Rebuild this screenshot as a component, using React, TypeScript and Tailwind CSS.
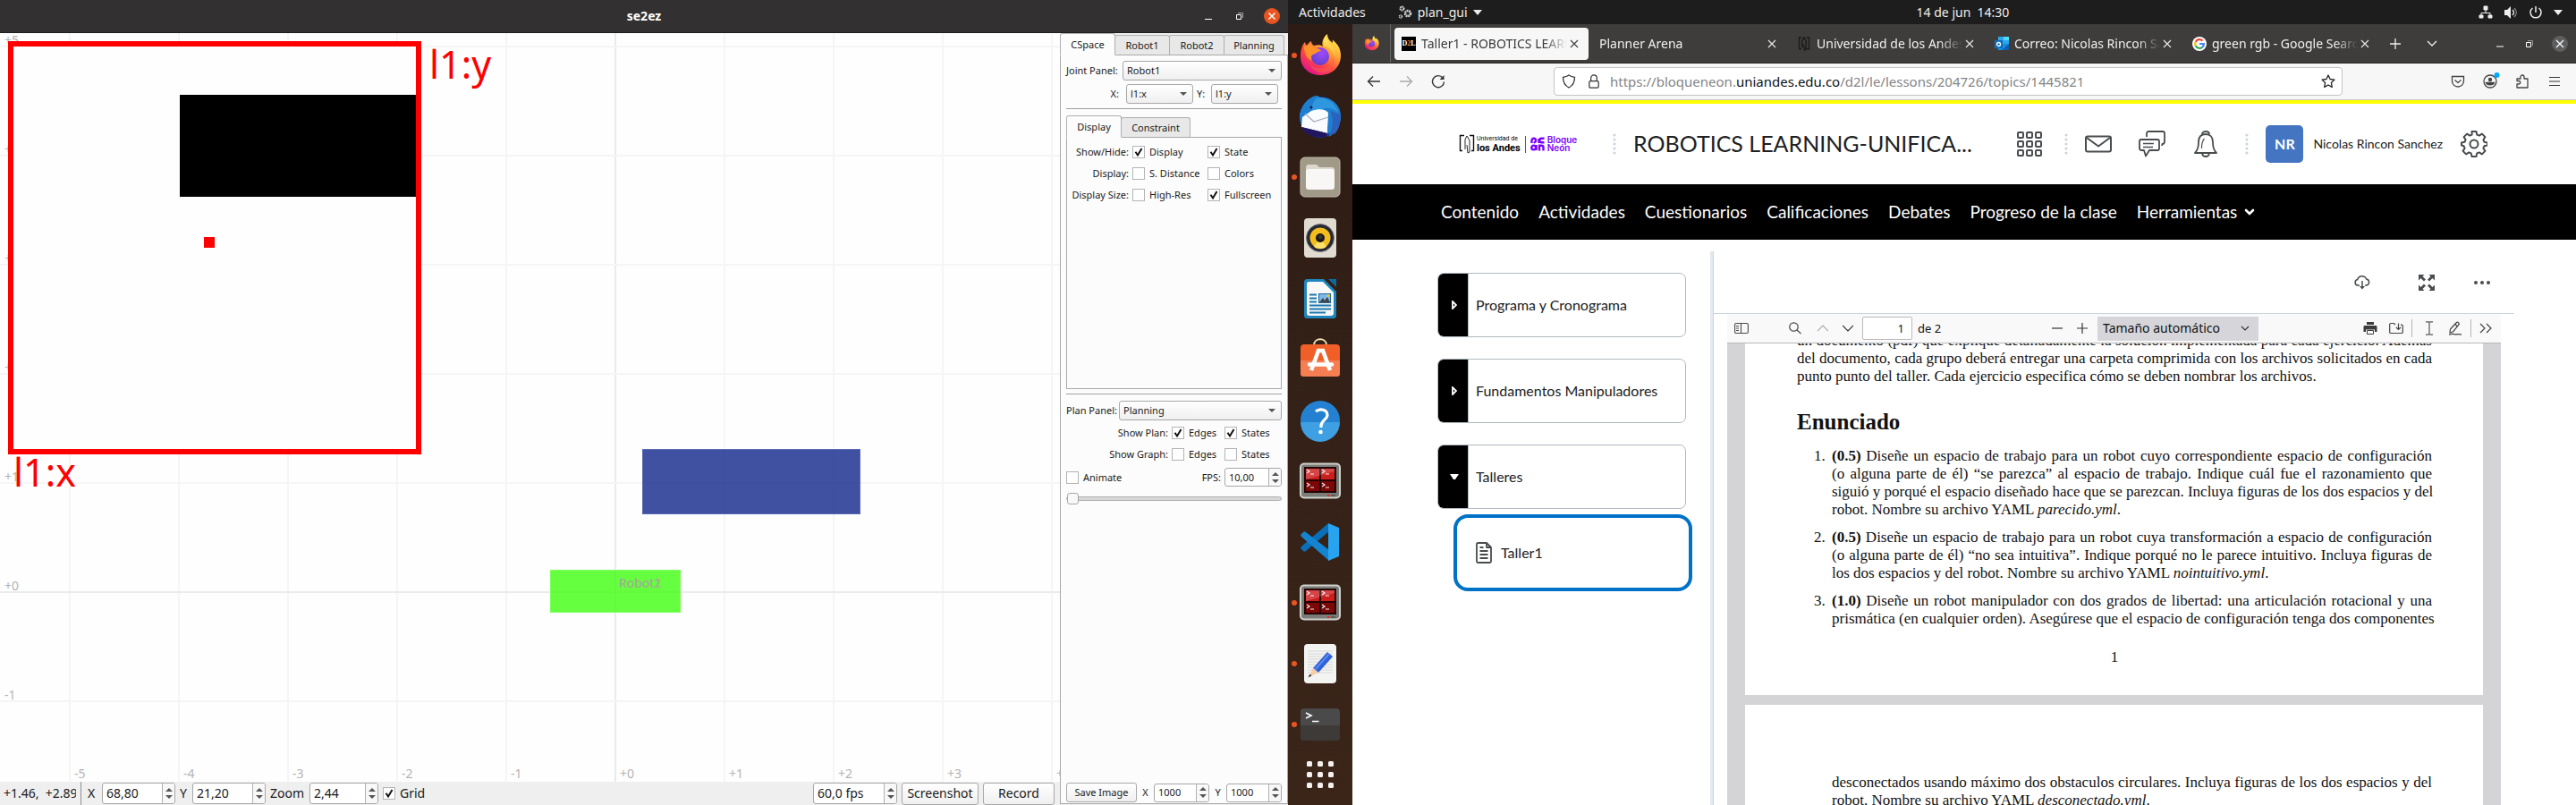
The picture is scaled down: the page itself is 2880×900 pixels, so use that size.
import React, { type ReactNode } from "react";

const UI = "font-['Noto_Sans','Open_Sans',sans-serif]";

/* ---------- Shared form controls of the Qt window ---------- */

function Tick({ label, checked, big }: { label: string; checked?: boolean; big?: boolean }) {
  return (
    <label className={`flex items-center ${big ? "gap-[5px] text-sm" : "gap-[5px] text-[11px]"}`}>
      <span className="grid size-3.5 shrink-0">
        <input
          type="checkbox"
          defaultChecked={checked}
          className="peer col-start-1 row-start-1 size-3.5 appearance-none border border-[#b4b4b4] bg-white"
        />
        <svg
          viewBox="0 0 14 14"
          className="pointer-events-none invisible col-start-1 row-start-1 size-3.5 peer-checked:visible"
          fill="none"
          stroke="#111"
          strokeWidth="2"
        >
          <path d="M3.5 6.8 6 10.5 10.5 3" />
        </svg>
      </span>
      {label}
    </label>
  );
}

function Spin({ id, value, className, label, big }: { id: string; value: string; className: string; label?: string; big?: boolean }) {
  return (
    <span className={`flex overflow-hidden rounded-[3px] border border-[#a8a8a8] bg-white ${className}`}>
      <input
        id={id}
        aria-label={label}
        defaultValue={value}
        className={`min-w-0 flex-1 bg-transparent pl-1 outline-none ${big ? "text-sm" : "text-[11px]"}`}
      />
      <span className="flex w-3.5 shrink-0 flex-col border-l border-[#b0b0b0] bg-[#f8f8f8]">
        <button type="button" aria-label="Aumentar" className="flex flex-1 items-end justify-center pb-0.5">
          <svg viewBox="0 0 8 4" className="h-1 w-2" fill="#555">
            <path d="M0 4h8L4 0z" />
          </svg>
        </button>
        <button type="button" aria-label="Disminuir" className="flex flex-1 items-start justify-center pt-0.5">
          <svg viewBox="0 0 8 4" className="h-1 w-2" fill="#555">
            <path d="M0 0h8L4 4z" />
          </svg>
        </button>
      </span>
    </span>
  );
}

function Combo({ id, value, className }: { id: string; value: string; className: string }) {
  return (
    <span className={`grid h-[22px] items-center ${className}`}>
      <select
        id={id}
        className="col-start-1 row-start-1 h-[22px] w-full appearance-none rounded-[3px] border border-[#a8a8a8] bg-linear-to-b from-white to-[#efefef] pl-1 text-[11px]"
      >
        <option>{value}</option>
      </select>
      <svg
        viewBox="0 0 8 4"
        className="pointer-events-none col-start-1 row-start-1 mr-[7px] h-1 w-2 justify-self-end"
        fill="#555"
      >
        <path d="M0 0h8L4 4z" />
      </svg>
    </span>
  );
}

function QtButton({ children, className }: { children: ReactNode; className: string }) {
  return (
    <button
      type="button"
      className={`whitespace-nowrap rounded-[3px] border border-[#a8a8a8] bg-linear-to-b from-white to-[#efefef] ${className}`}
    >
      {children}
    </button>
  );
}

/* ---------- Workspace plot ---------- */

const COLS = [
  { x: 78, t: "-5" },
  { x: 200, t: "-4" },
  { x: 322, t: "-3" },
  { x: 444, t: "-2" },
  { x: 566, t: "-1" },
  { x: 688, t: "+0" },
  { x: 810, t: "+1" },
  { x: 932, t: "+2" },
  { x: 1054, t: "+3" },
  { x: 1176, t: "+4" },
];
const ROWS = [
  { y: 15, t: "+5" },
  { y: 137, t: "+4" },
  { y: 259, t: "+3" },
  { y: 381, t: "+2" },
  { y: 503, t: "+1" },
  { y: 625, t: "+0" },
  { y: 747, t: "-1" },
];

function Plot() {
  return (
    <svg className="min-h-0 w-full flex-1 bg-[#fefefe]" fontFamily="Noto Sans, sans-serif" fontSize="14">
      {COLS.map((c) => (
        <rect key={c.t} x={c.x - 1} y="0" width="2" height="100%" fill={c.t === "+0" ? "#ebebeb" : "#f5f5f5"} />
      ))}
      {ROWS.map((r) => (
        <rect key={r.t} x="0" y={r.y - 1} width="100%" height="2" fill={r.t === "+0" ? "#ebebeb" : "#f5f5f5"} />
      ))}
      {ROWS.map((r) => (
        <text key={r.t} x="5" y={r.y - 2} fill="#b4b4b4">
          {r.t}
        </text>
      ))}
      {COLS.map((c) => (
        <text key={c.t} x={c.x + 5} y="833" fill="#b4b4b4">
          {c.t}
        </text>
      ))}
      <rect x="718.5" y="465.5" width="243" height="72" fill="#12268a" fillOpacity="0.8" stroke="#5a69b4" />
      <rect x="615.5" y="600.5" width="145" height="47" fill="#40ff10" fillOpacity="0.8" stroke="#7dff5e" />
      <g fill="#9fb18f">
        <text x="692" y="620">Robot1</text>
        <text x="692" y="620">Robot2</text>
      </g>
      <rect x="12" y="12" width="456" height="456" fill="#fefefe" stroke="#f00" strokeWidth="6" />
      <rect x="201" y="69" width="264" height="114" fill="#000" />
      <rect x="228" y="228" width="12" height="12" fill="#f00" />
      <g fill="#f00" fontSize="43">
        <text x="480" y="51">l1:y</text>
        <text x="15" y="507">l1:x</text>
      </g>
    </svg>
  );
}

function PanelTab({ children, active, className }: { children: ReactNode; active?: boolean; className: string }) {
  return (
    <button
      type="button"
      role="tab"
      aria-selected={!!active}
      className={`rounded-t-[3px] border border-[#b0b0b0] text-[11px] ${
        active ? "z-10 h-[25px] border-b-[#fcfcfc] bg-[#fcfcfc]" : "-ml-px h-[23px] bg-[#e8e8e8] border-b-[#a9a9a9]"
      } ${className}`}
    >
      {children}
    </button>
  );
}

function SidePanel() {
  return (
    <aside className="flex w-[255px] shrink-0 flex-col bg-[#efefef] text-[11px] leading-[14px] text-[#1a1a1a]">
      <div role="tablist" className="flex items-end">
        <PanelTab active className="w-[62px]">CSpace</PanelTab>
        <PanelTab className="w-[62px]">Robot1</PanelTab>
        <PanelTab className="w-[62px]">Robot2</PanelTab>
        <PanelTab className="w-[68px]">Planning</PanelTab>
      </div>
      <div className="-mt-px mb-px flex flex-1 flex-col border border-[#a9a9a9] bg-[#fcfcfc] px-1.5 pt-1.5">
        <div className="flex items-center">
          <label htmlFor="joint" className="w-[63px] whitespace-nowrap">Joint Panel:</label>
          <Combo id="joint" value="Robot1" className="flex-1" />
        </div>
        <div className="mt-1 flex items-center pr-1">
          <label htmlFor="jx" className="w-[59px] text-right">X:</label>
          <Combo id="jx" value="l1:x" className="ml-2 flex-1" />
          <label htmlFor="jy" className="ml-1 w-3">Y:</label>
          <Combo id="jy" value="l1:y" className="ml-1 flex-1" />
        </div>
        <hr className="mt-[5px] border-[#a0a0a0]" />
        <div role="tablist" className="mt-[7px] flex items-end">
          <PanelTab active className="w-[62px]">Display</PanelTab>
          <PanelTab className="w-[78px]">Constraint</PanelTab>
        </div>
        <div className="-mt-px grid h-[282px] grid-cols-[69px_84px_1fr] content-start gap-y-2.5 border border-[#a9a9a9] pt-[9px]">
          <span className="text-right">Show/Hide:</span>
          <span className="pl-1"><Tick label="Display" checked /></span>
          <span className="pl-1"><Tick label="State" checked /></span>
          <span className="text-right">Display:</span>
          <span className="whitespace-nowrap pl-1"><Tick label="S. Distance" /></span>
          <span className="pl-1"><Tick label="Colors" /></span>
          <span className="whitespace-nowrap text-right">Display Size:</span>
          <span className="pl-1"><Tick label="High-Res" /></span>
          <span className="pl-1"><Tick label="Fullscreen" checked /></span>
        </div>
        <hr className="mt-[5px] border-[#a0a0a0]" />
        <div className="mt-[7px] flex items-center">
          <label htmlFor="plan" className="w-[59px] whitespace-nowrap">Plan Panel:</label>
          <Combo id="plan" value="Planning" className="flex-1" />
        </div>
        <div className="mt-[7px] grid grid-cols-[1fr_59px_64px] gap-y-2.5">
          <span className="pr-1 text-right">Show Plan:</span>
          <Tick label="Edges" checked />
          <Tick label="States" checked />
          <span className="pr-1 text-right">Show Graph:</span>
          <Tick label="Edges" />
          <Tick label="States" />
        </div>
        <div className="mt-2 flex items-center">
          <Tick label="Animate" />
          <label htmlFor="fps" className="ml-auto mr-1">FPS:</label>
          <Spin id="fps" value="10,00" className="h-[21px] w-16" />
        </div>
        <input
          type="range"
          aria-label="Progreso de la animación"
          defaultValue={0}
          className="mt-1.5 h-3.5 w-full appearance-none bg-transparent [&::-webkit-slider-runnable-track]:h-[5px] [&::-webkit-slider-runnable-track]:rounded-[3px] [&::-webkit-slider-runnable-track]:border [&::-webkit-slider-runnable-track]:border-[#b0b0b0] [&::-webkit-slider-runnable-track]:bg-[#d8d8d8] [&::-webkit-slider-thumb]:-mt-[5px] [&::-webkit-slider-thumb]:size-[13px] [&::-webkit-slider-thumb]:appearance-none [&::-webkit-slider-thumb]:rounded-[3px] [&::-webkit-slider-thumb]:border [&::-webkit-slider-thumb]:border-[#a8a8a8] [&::-webkit-slider-thumb]:bg-[#f8f8f8]"
        />
        <div className="mb-px mt-auto flex items-center">
          <QtButton className="h-[22px] w-[79px]">Save Image</QtButton>
          <label htmlFor="imgx" className="flex-1 text-center">X</label>
          <Spin id="imgx" value="1000" className="h-[21px] w-[62px]" />
          <label htmlFor="imgy" className="flex-1 text-center">Y</label>
          <Spin id="imgy" value="1000" className="h-[21px] w-[62px]" />
        </div>
      </div>
    </aside>
  );
}

function PlannerWindow() {
  return (
    <section className="flex w-1/2 min-w-0 flex-col">
      <header className="grid h-[37px] shrink-0 grid-cols-[1fr_auto_1fr] items-center border-b border-[#1f1d1d] bg-[#323030] text-white">
        <span />
        <h1 className="text-sm font-bold">se2ez</h1>
        <div className="flex items-center justify-end gap-[19px] pr-[9px]">
          <button type="button" aria-label="Minimizar">
            <svg viewBox="0 0 16 16" className="size-4" stroke="#fff"><path d="M4 11.5h8" /></svg>
          </button>
          <button type="button" aria-label="Restaurar">
            <svg viewBox="0 0 16 16" className="size-4" fill="none" stroke="#fff">
              <path d="M4.5 6.5h5v5h-5z" />
              <path d="M6 4.5h5.500v5.500" stroke="#aaa" />
            </svg>
          </button>
          <button type="button" aria-label="Cerrar">
            <svg viewBox="0 0 18 18" className="size-[18px]">
              <circle cx="9" cy="9" r="9" fill="#e95420" />
              <path d="m5.500 5.500 7 7m0-7-7 7" stroke="#fff" strokeWidth="1.500" />
            </svg>
          </button>
        </div>
      </header>
      <div className="flex min-h-0 flex-1">
        <div className="flex min-w-0 flex-1 flex-col">
          <Plot />
          <footer className="flex h-[26px] shrink-0 items-center bg-[#efefef] pl-1 pr-1.5 text-sm text-[#1a1a1a]">
            <output className="w-[81px] overflow-hidden whitespace-nowrap">+1.46, &nbsp;+2.89</output>
            <span className="ml-[5px] h-full w-px bg-[#909090]" />
            <label htmlFor="vx" className="ml-[7px] w-4">X</label>
            <Spin big id="vx" value="68,80" className="h-6 w-[82px]" />
            <label htmlFor="vy" className="ml-[5px] w-3.5">Y</label>
            <Spin big id="vy" value="21,20" className="h-6 w-[82px]" />
            <label htmlFor="vz" className="ml-[5px] w-11">Zoom</label>
            <Spin big id="vz" value="2,44" className="h-6 w-[77px]" />
            <span className="ml-[5px]"><Tick big label="Grid" checked /></span>
            <span className="ml-auto"><Spin big id="rate" label="Cuadros por segundo" value="60,0 fps" className="h-6 w-[94px]" /></span>
            <QtButton className="ml-[5px] h-[25px] w-[86px]">Screenshot</QtButton>
            <QtButton className="ml-[5px] h-[25px] w-20">Record</QtButton>
          </footer>
        </div>
        <SidePanel />
      </div>
    </section>
  );
}

/* ---------- Dock icons ---------- */

function Firefox({ id, className }: { id: string; className: string }) {
  return (
    <svg viewBox="0 0 48 48" className={className}>
      <defs>
        <linearGradient id={`${id}a`} x1="0.85" y1="0.05" x2="0.25" y2="0.95">
          <stop offset="0" stopColor="#fff44f" />
          <stop offset="0.35" stopColor="#ffa436" />
          <stop offset="0.65" stopColor="#ff4f3d" />
          <stop offset="1" stopColor="#e31587" />
        </linearGradient>
        <radialGradient id={`${id}b`} cx="0.6" cy="0.3" r="0.8">
          <stop offset="0" stopColor="#a14bf5" />
          <stop offset="1" stopColor="#5a3fd0" />
        </radialGradient>
        <linearGradient id={`${id}c`} x1="0" y1="0" x2="0" y2="1">
          <stop offset="0" stopColor="#fff36a" />
          <stop offset="1" stopColor="#ffb02e" />
        </linearGradient>
      </defs>
      <path
        d="M3 17c1-4 2-6 4-8 .5 2 1 3 2 4 1-2 3-4 5-5 0 2 1 4 3 5 4-1 8-1 10 1-2-5 1-11 5-14 0 5 3 8 6 10-.2-1 0-2-.5-3.500C45 12 47 18 47 24c0 13-10 22-23 22S2 37 2 25c0-3 .3-6 1-8z"
        fill={`url(#${id}a)`}
      />
      <path d="M31 1c0 6 3 9 6 12 4 4 5 10 2 15 1-8-5-13-11-15-1-5 1-9 3-12z" fill={`url(#${id}c)`} opacity="0.9" />
      <circle cx="24" cy="25" r="10" fill={`url(#${id}b)`} />
      <path d="M6 14c5-3 9-2 13 2 3 0 5 1 6 3-4 0-5 3-9 4-2 1-3 4-1 7-6-2-9-8-9-16z" fill="#ff9228" />
      <path d="M12 33c5 6 15 8 22 2 4-3 5-8 4-12 4 8 0 17-8 20-8 2-15-3-18-10z" fill="#ff5a50" opacity="0.55" />
    </svg>
  );
}

function Thunderbird() {
  return (
    <svg viewBox="0 0 48 48" className="size-12">
      <circle cx="24" cy="25" r="23" fill="#1b3f92" />
      <path d="M1 22C4 8 14 1 21 1l3 2c12-1 23 8 23 21 0 10-5 18-13 23l1-5-4 3c3-8 2-14-1-20-6-7-15-8-21-3-4 3-5 8-5 14-2-4-3-9-3-14z" fill="#1e7fd0" />
      <path d="M22 3c10 0 20 7 22 17-6-6-13-6-17-4l-12 3c-1-6 1-13 7-16z" fill="#2f97dd" />
      <path d="M35 18c4 8 4 18-1 28l5-3 1 1c6-6 7-15 6-22z" fill="#2b62bd" />
      <path d="m4 25 10-7c9-3 16-2 19 2l-1 23L3 36z" fill="#fafbff" />
      <path d="m7 21 10 9 16-5" fill="none" stroke="#a5adbd" strokeWidth="1.200" />
      <path d="m3 36 29 7-1 4C19 49 8 46 3 36z" fill="#231660" />
      <circle cx="14" cy="14" r="1.500" fill="#0b1f45" />
    </svg>
  );
}

function Files() {
  return (
    <svg viewBox="0 0 48 48" className="size-12">
      <rect x="2" y="2" width="44" height="44" rx="5" fill="#a29a89" stroke="#c0b9aa" />
      <path d="M8 14c0-3 1-4 3-4h9l3 3h14c2 0 3 1 3 3v4H8z" fill="#ddd8ce" />
      <rect x="8" y="15" width="32" height="23" rx="3" fill="#f8f7f5" />
    </svg>
  );
}

function Rhythmbox() {
  return (
    <svg viewBox="0 0 48 48" className="size-12">
      <rect x="6" y="2" width="36" height="44" rx="4" fill="#e0dcd1" />
      <circle cx="24" cy="24" r="15.500" fill="#272932" stroke="#777984" strokeWidth="0.800" />
      <circle cx="24" cy="24" r="11.500" fill="#f3bd1e" />
      <path d="M24 24 17 34a12 12 0 0 0 14 0z" fill="#ffe16a" />
      <circle cx="24" cy="24" r="5" fill="#161616" />
      <circle cx="24" cy="23" r="2.500" fill="#333" />
    </svg>
  );
}

function Writer() {
  return (
    <svg viewBox="0 0 48 48" className="size-12">
      <path d="M10 2h18l14 14v26c0 3-1 4-4 4H10c-3 0-4-1-4-4V6c0-3 1-4 4-4z" fill="#1f86bd" />
      <path d="M33 2h9v9z" fill="#0d6a9f" />
      <path d="M11 5h16l12 12v23c0 2-1 3-3 3H12c-2 0-3-1-3-3V7c0-1 1-2 2-2z" fill="#f8f8f8" />
      <path d="M12 19.500h8m-8 4h8m-8 4h8m-8 4h24m-24 4h24m-24 4h18" stroke="#1b78b0" strokeWidth="1.800" />
      <rect x="22.500" y="18.500" width="13" height="10" fill="#7db9e8" stroke="#1b6ca0" />
      <path d="m23 28 4-5 2 3 3-4 3 6z" fill="#454545" />
      <circle cx="33" cy="20.500" r="1.500" fill="#f7c325" />
    </svg>
  );
}

function Software() {
  return (
    <svg viewBox="0 0 48 48" className="size-12">
      <path d="M17 8c0-9 14-9 14 0" fill="none" stroke="#f5dfb5" strokeWidth="2" />
      <rect x="2" y="7" width="44" height="36" rx="4" fill="#f05f28" />
      <path d="M2 25h44v14c0 3-1 4-4 4H6c-3 0-4-1-4-4z" fill="#f57f52" />
      <path d="m14 36 8-22h5l8 22" fill="none" stroke="#fff" strokeWidth="4.500" />
      <path d="M12 29.500h25" stroke="#fff" strokeWidth="4.500" strokeLinecap="round" />
    </svg>
  );
}

function Help() {
  return (
    <svg viewBox="0 0 48 48" className="size-12">
      <circle cx="24" cy="24" r="22" fill="#2480d0" />
      <path d="M2 26a22 22 0 0 0 44 0z" fill="#3f9fe3" />
      <path d="M19 14c5-4 13-2 13 4 0 5-7 6-7 12v2" fill="none" stroke="#fff" strokeWidth="3.200" />
      <circle cx="24.500" cy="37" r="2.300" fill="#fff" />
    </svg>
  );
}

function Terminator() {
  return (
    <svg viewBox="0 0 48 48" className="size-12">
      <rect x="2" y="4.500" width="44" height="38" rx="4" fill="#7b7c78" stroke="#cfd1cb" strokeWidth="2" />
      <rect x="6" y="8" width="36" height="29" fill="#240404" />
      <path d="M8 10h15v12H8zM25 10h15v12H25z" fill="#cd1d1d" />
      <path d="M8 24h15v11H8zM25 24h15v11H25z" fill="#7c0707" />
      <path d="M8 10h32v3L8 22z" fill="#fff" opacity="0.18" />
      <path
        d="m9 11 3 2-3 2m4 1h4m9-5 3 2-3 2m4 1h4M9 26l3 2-3 2m4 1h4m9-5 3 2-3 2m4 1h4"
        fill="none"
        stroke="#eee"
        strokeWidth="1.200"
      />
      <rect x="32" y="39" width="2.500" height="2" fill="#f02020" />
      <rect x="36" y="39" width="5" height="2" fill="#5c5d5a" />
    </svg>
  );
}

function Code() {
  return (
    <svg viewBox="0 0 48 48" className="size-12">
      <path d="M3 29 33 3l1 9L8 34c-1 1-2 1-3 0l-2-2c-1-1-1-2 0-3z" fill="#0a6fb8" />
      <path d="M3 15c-1 1-1 2 0 3l31 27V33L8 13c-1-1-2-1-3 0z" fill="#1484d0" />
      <path d="M33 3 45 8v32l-12 5z" fill="#27a3f0" />
    </svg>
  );
}

function Gedit() {
  return (
    <svg viewBox="0 0 48 48" className="size-12">
      <rect x="6" y="2" width="36" height="44" rx="4" fill="#f3f3f2" />
      <path d="M10 10h28M10 13h28M10 16h28M10 19h28M10 22h28M10 25h28M10 28h28M10 31h28M10 34h28" stroke="#cfcfcf" strokeWidth="0.800" />
      <path d="m16 29 16-18 6 5-16 18z" fill="#2f61d8" />
      <path d="m18 31 16-18" stroke="#5b8af2" strokeWidth="2" />
      <path d="m16 29 6 5-11 5z" fill="#f4cfa4" />
      <path d="m12.500 35.500 2 2-4 2z" fill="#333" />
    </svg>
  );
}

function Terminal() {
  return (
    <svg viewBox="0 0 48 48" className="size-12">
      <rect x="2" y="6" width="44" height="36" rx="4" fill="#4a4a4a" />
      <path d="M2 25h44v13c0 3-1 4-4 4H6c-3 0-4-1-4-4z" fill="#3d3a38" />
      <path d="m8 11 6 3-6 3M15 20.500h7.500" fill="none" stroke="#fff" strokeWidth="1.600" />
    </svg>
  );
}

const DOCK: { name: string; icon: ReactNode; running?: boolean }[] = [
  { name: "Firefox", icon: <Firefox id="ffd" className="size-12" />, running: true },
  { name: "Thunderbird", icon: <Thunderbird /> },
  { name: "Archivos", icon: <Files />, running: true },
  { name: "Rhythmbox", icon: <Rhythmbox /> },
  { name: "LibreOffice Writer", icon: <Writer /> },
  { name: "Software", icon: <Software /> },
  { name: "Ayuda", icon: <Help /> },
  { name: "Terminator", icon: <Terminator /> },
  { name: "Visual Studio Code", icon: <Code /> },
  { name: "Terminator 2", icon: <Terminator />, running: true },
  { name: "Editor de textos", icon: <Gedit />, running: true },
  { name: "Terminal", icon: <Terminal />, running: true },
];

function Dock() {
  return (
    <nav aria-label="Dock" className="flex w-[72px] shrink-0 flex-col bg-linear-to-b from-[#2d1c15] to-[#3b2519] pt-px">
      {DOCK.map((d) => (
        <button key={d.name} type="button" aria-label={d.name} className="flex h-[68px] shrink-0 items-center">
          <span className={`ml-1 mr-0.5 size-1.5 rounded-full ${d.running ? "bg-[#e95420]" : ""}`} />
          {d.icon}
        </button>
      ))}
      <button type="button" aria-label="Mostrar aplicaciones" className="flex h-11 items-center justify-center">
        <svg viewBox="0 0 30 30" className="size-[30px]" fill="#f4f2f1">
          {[0, 12, 24].map((y) => [0, 12, 24].map((x) => <rect key={`${x}-${y}`} x={x} y={y} width="6" height="6" rx="1.500" />))}
        </svg>
      </button>
    </nav>
  );
}

/* ---------- Top bar ---------- */

function TopBar() {
  return (
    <header className="grid h-[27px] shrink-0 grid-cols-[72px_1fr_auto_1fr] items-center bg-[#1d1d1d] pl-3 pr-[15px] text-sm text-[#ededed]">
      <div className="col-span-2 flex items-center">
        <button type="button">Actividades</button>
        <button type="button" className="ml-9 flex items-center gap-1.5">
          <svg viewBox="0 0 16 16" className="size-4" fill="none" stroke="#dcdcdc">
            <circle cx="4.500" cy="3.500" r="2" strokeWidth="2" strokeDasharray="1.500 0.600" />
            <circle cx="11" cy="9" r="3" strokeWidth="2.600" strokeDasharray="1.800 0.700" />
            <circle cx="3" cy="12.500" r="1.500" strokeWidth="1.500" strokeDasharray="1 0.500" />
          </svg>
          plan_gui
          <svg viewBox="0 0 10 6" className="h-1.5 w-2.5" fill="#ededed"><path d="M0 0h10L5 6z" /></svg>
        </button>
      </div>
      <time>14 de jun &nbsp;14:30</time>
      <div className="flex items-center justify-end gap-3">
        <svg viewBox="0 0 16 16" className="size-4" fill="#ededed" stroke="#ededed">
          <path d="M6 1h4v4H6zM1 11h4v3H1zM11 11h4v3h-4z" />
          <path d="M8 5v3M3 11V8.500h10V11" fill="none" />
        </svg>
        <svg viewBox="0 0 16 16" className="size-4" fill="#ededed">
          <path d="M1 5h3l4-4v14l-4-4H1z" />
          <path d="M10 5c2 2 2 4 0 6" fill="none" stroke="#ededed" strokeWidth="1.300" />
          <path d="M12 3c3 3 3 7 0 10" fill="none" stroke="#888" strokeWidth="1.300" />
        </svg>
        <svg viewBox="0 0 16 16" className="size-4" fill="none" stroke="#ededed" strokeWidth="1.500">
          <path d="M8 1v7M4.500 3a6 6 0 1 0 7 0" />
        </svg>
        <svg viewBox="0 0 10 6" className="h-1.5 w-2.5" fill="#ededed"><path d="M0 0h10L5 6z" /></svg>
      </div>
    </header>
  );
}

/* ---------- Browser ---------- */

function Cross({ stroke }: { stroke: string }) {
  return (
    <svg viewBox="0 0 10 10" className="size-2.5" stroke={stroke} strokeWidth="1.200">
      <path d="m1 1 8 8m0-8-8 8" />
    </svg>
  );
}

function BrowserTab({ icon, title, active }: { icon?: ReactNode; title: string; active?: boolean }) {
  return (
    <div
      role="tab"
      aria-selected={!!active}
      className={`flex w-[217px] items-center rounded-[4px] pl-2 pr-[11px] ${active ? "bg-[#f7f7f7] text-[#3a3a3a]" : "text-[#f0f0f0]"}`}
    >
      {icon && <span className="mr-1.5 size-4 shrink-0">{icon}</span>}
      <span className="min-w-0 flex-1 overflow-hidden whitespace-nowrap text-sm [mask-image:linear-gradient(to_right,black_84%,transparent)]">
        {title}
      </span>
      <button type="button" aria-label="Cerrar pestaña" className="shrink-0 pl-[3px]">
        <Cross stroke={active ? "#444" : "#e6e6e6"} />
      </button>
    </div>
  );
}

const D2L = (
  <span className="flex size-4 items-center justify-center bg-black font-['Liberation_Serif',serif] text-[8px] leading-none font-bold text-white">
    D<span className="text-[#ff8a30]">2</span>L
  </span>
);

const ANDES = (
  <svg viewBox="0 0 18 22" className="size-4" fill="none" stroke="#1d1b1b" strokeWidth="2">
    <path d="M5 1H1.500v18H5M13 1h3.500v18H13M6 17V6l3-5 3 6v12l-2 2-2-9" />
  </svg>
);

const OUTLOOK = (
  <svg viewBox="0 0 16 16" className="size-4">
    <path d="M4 0h12v9H4z" fill="#28a8ea" />
    <path d="M10 0h6v4h-6z" fill="#50d9ff" />
    <path d="M3 8h13v7H4z" fill="#1490df" />
    <path d="m16 8-8 7h8z" fill="#0f5fb5" />
    <rect y="4" width="9" height="9" fill="#0f6cbd" />
    <circle cx="4.500" cy="8.500" r="2" fill="none" stroke="#fff" strokeWidth="1.300" />
  </svg>
);

const GOOGLE = (
  <svg viewBox="0 0 16 16" className="size-4" fill="none" strokeWidth="2.200">
    <circle cx="8" cy="8" r="8" fill="#fff" />
    <path d="M11.500 4.600A4.900 4.900 0 0 0 3.700 5.700" stroke="#ea4335" />
    <path d="M3.700 5.700a4.900 4.900 0 0 0 0 4.600" stroke="#fbbc05" />
    <path d="M3.700 10.300a4.900 4.900 0 0 0 7.400 1.500" stroke="#34a853" />
    <path d="M8 8h4.900a4.900 4.900 0 0 1-1.800 3.800" stroke="#4285f4" />
  </svg>
);

function TabStrip() {
  return (
    <div className="flex h-11 shrink-0 items-center border-b border-[#262425] bg-[#3f3d3b]">
      <button type="button" aria-label="Firefox View" className="flex h-full w-[43px] items-center justify-center border-r border-[#6a6866] pl-px">
        <Firefox id="fft" className="size-[17px]" />
      </button>
      <div role="tablist" className="ml-1 flex h-9 gap-1">
        <BrowserTab active icon={D2L} title="Taller1 - ROBOTICS LEARN" />
        <BrowserTab title="Planner Arena" />
        <BrowserTab icon={ANDES} title="Universidad de los Andes" />
        <BrowserTab icon={OUTLOOK} title="Correo: Nicolas Rincon San" />
        <BrowserTab icon={GOOGLE} title="green rgb - Google Search" />
      </div>
      <button type="button" aria-label="Nueva pestaña" className="ml-3">
        <svg viewBox="0 0 12 12" className="size-3" stroke="#f0f0f0" strokeWidth="1.300"><path d="M6 0v12M0 6h12" /></svg>
      </button>
      <button type="button" aria-label="Listar pestañas" className="ml-[29px]">
        <svg viewBox="0 0 12 8" className="h-2 w-3" fill="none" stroke="#f0f0f0" strokeWidth="1.300"><path d="m1 1 5 5 5-5" /></svg>
      </button>
      <div className="ml-auto flex items-center gap-[17px] pr-[9px]">
        <button type="button" aria-label="Minimizar">
          <svg viewBox="0 0 16 16" className="size-4" stroke="#fff"><path d="M4 11h8" /></svg>
        </button>
        <button type="button" aria-label="Restaurar">
          <svg viewBox="0 0 16 16" className="size-4" fill="none" stroke="#fff">
            <path d="M4.500 6.500h5v5h-5z" />
            <path d="M6 4.500h5.500v5.500" stroke="#999" />
          </svg>
        </button>
        <button type="button" aria-label="Cerrar ventana" className="flex size-[18px] items-center justify-center rounded-full bg-[#5d5e5f]">
          <Cross stroke="#fff" />
        </button>
      </div>
    </div>
  );
}

function ToolBar() {
  return (
    <div className="flex h-[41px] shrink-0 items-center border-b border-[#c8c8cc] bg-[#f7f7f7] pl-4 pr-4">
      <button type="button" aria-label="Atrás">
        <svg viewBox="0 0 16 16" className="size-4" fill="none" stroke="#333" strokeWidth="1.300"><path d="M15 8H1.500M7 2.500 1.500 8 7 13.500" /></svg>
      </button>
      <button type="button" aria-label="Adelante" className="ml-5">
        <svg viewBox="0 0 16 16" className="size-4" fill="none" stroke="#aaa" strokeWidth="1.300"><path d="M1 8h13.500M9 2.500 14.500 8 9 13.500" /></svg>
      </button>
      <button type="button" aria-label="Recargar" className="ml-5">
        <svg viewBox="0 0 16 16" className="size-4" fill="none" stroke="#333" strokeWidth="1.400">
          <path d="M13 4a6.500 6.500 0 1 0 1.500 4.500" />
          <path d="M14.500 1v5h-5z" fill="#333" stroke="none" />
        </svg>
      </button>
      <div className="mx-[121px] flex h-8 flex-1 items-center rounded-[4px] border border-[#c4c4c8] bg-white pl-2 pr-[7px]">
        <svg viewBox="0 0 16 16" className="size-4" fill="none" stroke="#333" strokeWidth="1.300">
          <path d="M8 1c2 1.500 4 2 6.500 2.300C14.500 9 12 13 8 15 4 13 1.500 9 1.500 3.300 4 3 6 2.500 8 1z" />
        </svg>
        <svg viewBox="0 0 16 18" className="ml-3 h-[17px] w-4" fill="none" stroke="#333" strokeWidth="1.300">
          <rect x="2.500" y="8" width="11" height="8" rx="1.500" />
          <path d="M4.500 8V4.500a3.500 3.500 0 0 1 7 0V8" />
        </svg>
        <a href="https://bloqueneon.uniandes.edu.co/d2l/le/lessons/204726/topics/1445821" className="ml-2.5 flex-1 text-[15px] text-[#858585]">
          https://bloqueneon.<span className="text-[#111]">uniandes.edu.co</span>/d2l/le/lessons/204726/topics/1445821
        </a>
        <button type="button" aria-label="Añadir marcador">
          <svg viewBox="0 0 16 16" className="size-4" fill="none" stroke="#222" strokeWidth="1.300" strokeLinejoin="round">
            <path d="m8 1 2.100 4.500 4.900.600-3.600 3.400.9 4.900L8 12l-4.300 2.400.9-4.900L1 6.100l4.900-.600z" />
          </svg>
        </button>
      </div>
      <div className="flex items-center gap-5">
        <button type="button" aria-label="Pocket">
          <svg viewBox="0 0 16 16" className="size-4" fill="none" stroke="#444" strokeWidth="1.300">
            <path d="M1.500 2.500h13v5a6.500 6.500 0 0 1-13 0zM4.500 6.500 8 9.500l3.500-3" />
          </svg>
        </button>
        <button type="button" aria-label="Cuenta">
          <svg viewBox="0 0 16 16" className="size-4 overflow-visible" fill="none" stroke="#444" strokeWidth="1.300">
            <circle cx="8" cy="8" r="7" />
            <circle cx="8" cy="6" r="2.200" fill="#444" stroke="none" />
            <path d="M3.500 9.500h9c-1 3-8 3-9 0z" fill="#444" />
            <circle cx="15.500" cy="1" r="3" fill="#00aaff" stroke="none" />
          </svg>
        </button>
        <button type="button" aria-label="Extensiones">
          <svg viewBox="0 0 16 16" className="size-4" fill="none" stroke="#444" strokeWidth="1.300" strokeLinejoin="round">
            <path d="M2 5h4V3a2 2 0 0 1 4 0v2h4v10H2v-4h2a1.700 1.700 0 0 0 0-3.500H2z" />
          </svg>
        </button>
        <button type="button" aria-label="Menú">
          <svg viewBox="0 0 16 16" className="size-4" stroke="#333" strokeWidth="1.200"><path d="M2 3.500h12M2 8h12M2 12.500h12" /></svg>
        </button>
      </div>
    </div>
  );
}

function Dots() {
  return (
    <svg viewBox="0 0 4 24" className="h-6 w-1 shrink-0" fill="#ccd5dd">
      {[2, 7, 12, 17, 22].map((y) => <circle key={y} cx="2" cy={y} r="1.600" />)}
    </svg>
  );
}

function CourseHeader() {
  return (
    <header className="flex h-[90px] shrink-0 items-center pl-[119px] pr-[99px] text-[#202122]">
      <a href="#inicio" className="flex w-[134px] shrink-0 items-center leading-none whitespace-nowrap">
        <svg viewBox="0 0 18 22" className="h-[22px] w-[18px] shrink-0" fill="none" stroke="#111">
          <path d="M6 1.500H1.500v17H4M12 1.500h4.500v17H14" strokeWidth="1.400" />
          <path d="M7 17V6l2-4 3 5v13l-2 1-1-9" strokeWidth="0.900" />
        </svg>
        <span className="ml-0.5 flex flex-col gap-px border-r border-[#555] pr-[5px] font-['Roboto',sans-serif] text-black">
          <span className="text-[7px]">Universidad de</span>
          <span className="text-[11px] font-bold">los Andes</span>
        </span>
        <svg viewBox="0 0 16 16" className="ml-[5px] size-4 shrink-0" fill="none" stroke="#7a00ff" strokeWidth="2.400">
          <path d="M1.500 7V4a2.300 2.300 0 0 1 4.600 0 2.300 2.300 0 0 1-2.500 2.300M9.500 7V2M15.500 1.800h-3a2.200 2.200 0 0 0 0 4.400h3" />
          <circle cx="3.700" cy="12" r="2.400" />
          <path d="M6.500 9v6M10 15.500V9.800h2.500a2 2 0 0 1 2 2v3.700" />
        </svg>
        <span className="ml-[3px] flex flex-col font-['Inter',sans-serif] text-[10px] leading-[9px] font-semibold text-[#7a00ff]">
          <span>Bloque</span>
          <span>Neón</span>
        </span>
      </a>
      <span className="ml-[38px]"><Dots /></span>
      <h2 className="ml-[19px] whitespace-nowrap text-[25px]">ROBOTICS LEARNING-UNIFICA...</h2>
      <div className="ml-auto flex shrink-0 items-center">
        <button type="button" aria-label="Cursos">
          <svg viewBox="0 0 30 30" className="size-[30px]" fill="none" stroke="#494c4e" strokeWidth="2">
            {[2, 12, 22].map((y) => [2, 12, 22].map((x) => <rect key={`${x}-${y}`} x={x} y={y} width="6" height="6" rx="1" />))}
          </svg>
        </button>
        <span className="ml-6"><Dots /></span>
        <button type="button" aria-label="Mensajes" className="ml-[19px]">
          <svg viewBox="0 0 30 30" className="size-[30px]" fill="none" stroke="#494c4e" strokeWidth="2" strokeLinejoin="round">
            <rect x="1" y="6.500" width="28" height="17" rx="2" />
            <path d="m2 8 13 9.500L28 8" />
          </svg>
        </button>
        <button type="button" aria-label="Suscripciones" className="ml-[30px]">
          <svg viewBox="0 0 30 30" className="size-[30px]" fill="none" stroke="#494c4e" strokeWidth="1.800" strokeLinejoin="round">
            <path d="M9 7V3c0-1 1-2 2-2h16c1 0 2 1 2 2v9c0 2-1 3-2.500 3L26 17" />
            <path d="M3 10h18c1 0 2 1 2 2v8c0 1-1 2-2 2h-9l-4 6.500-2-6.500H3c-1 0-2-1-2-2v-8c0-1 1-2 2-2z" />
            <path d="M5 14.500h12M5 18.500h11" strokeWidth="1.500" />
          </svg>
        </button>
        <button type="button" aria-label="Alertas" className="ml-[30px]">
          <svg viewBox="0 0 30 30" className="size-[30px]" fill="none" stroke="#494c4e" strokeWidth="1.800" strokeLinejoin="round">
            <path d="M11 4c0-4 8-4 8 0M3 25h24c-3-3-4-6-4-12 0-6-3-9-8-9s-8 3-8 9c0 6-1 9-4 12z" />
            <path d="M11 26c1 4 7 4 8 0" />
            <path d="M10.500 20c0-4 0-8 3-11" strokeWidth="1.200" />
          </svg>
        </button>
        <span className="ml-[29px]"><Dots /></span>
        <button type="button" className="ml-[19px] flex items-center gap-[11px] text-sm">
          <span className="flex size-[42px] items-center justify-center rounded-[5px] bg-[#4475c2] text-base font-bold text-white">NR</span>
          Nicolas Rincon Sanchez
        </button>
        <button type="button" aria-label="Configuración" className="ml-5">
          <svg viewBox="0 0 30 30" className="size-[30px]" fill="none" stroke="#494c4e" strokeWidth="2" strokeLinejoin="round">
            <path d="M12.500 1h5l.8 3.600 2.400 1 3.200-2 3.500 3.500-2 3.200 1 2.400 3.600.8v3l-3.600.8-1 2.400 2 3.200-3.500 3.500-3.200-2-2.400 1-.8 3.600h-5l-.8-3.600-2.400-1-3.200 2-3.500-3.500 2-3.200-1-2.400L1 16.500v-3l3.600-.8 1-2.400-2-3.200 3.500-3.500 3.200 2 2.400-1z" />
            <circle cx="15" cy="15" r="4.500" />
          </svg>
        </button>
      </div>
    </header>
  );
}

const LINKS = ["Contenido", "Actividades", "Cuestionarios", "Calificaciones", "Debates", "Progreso de la clase"];

function CourseNav() {
  return (
    <nav className="flex h-[62px] shrink-0 items-center gap-[22px] bg-black pl-[99px] text-[19px] whitespace-nowrap text-white">
      {LINKS.map((l) => (
        <a key={l} href="#curso">{l}</a>
      ))}
      <button type="button" className="flex items-center gap-2">
        Herramientas
        <svg viewBox="0 0 12 8" className="h-2 w-3" fill="none" stroke="#fff" strokeWidth="2.600" strokeLinecap="round"><path d="m2 2 4 4 4-4" /></svg>
      </button>
    </nav>
  );
}

function Module({ title, open }: { title: string; open?: boolean }) {
  return (
    <button type="button" aria-expanded={!!open} className="flex h-[72px] w-[278px] overflow-hidden rounded-[7px] border border-[#b1b9be] text-left">
      <span className="flex h-full w-[34px] items-center justify-center border-r border-[#b1b9be] bg-black pl-0.5">
        {open ? (
          <svg viewBox="0 0 10 6" className="h-1.5 w-2.5" fill="#fff"><path d="M0 0h10L6 6H4z" /></svg>
        ) : (
          <svg viewBox="0 0 6 10" className="h-2.5 w-1.5" fill="none" stroke="#fff" strokeWidth="1.800"><path d="M1 1v8l4-4z" /></svg>
        )}
      </span>
      <span className="self-center pl-2">{title}</span>
    </button>
  );
}

function Outline() {
  return (
    <aside className="flex w-[404px] shrink-0 flex-col border-r border-[#cdd5dc] pl-[95px] pt-6 text-base text-[#202122] shadow-[inset_-3px_0_0_#e3e9f1]">
      <div className="flex flex-col items-start gap-6">
        <Module title="Programa y Cronograma" />
        <Module title="Fundamentos Manipuladores" />
        <Module title="Talleres" open />
      </div>
      <a
        href="#taller1"
        className="ml-[18px] mt-1.5 flex h-[86px] w-[267px] items-center gap-2.5 rounded-2xl border-4 border-[#0072c6] pl-[21px]"
      >
        <svg viewBox="0 0 18 24" className="h-6 w-[18px]" fill="none" stroke="#494c4e" strokeWidth="1.800" strokeLinejoin="round">
          <path d="M12 1H2.500C1.500 1 1 1.500 1 2.500v19c0 1 .5 1.500 1.500 1.500h13c1 0 1.500-.5 1.500-1.500V6z" />
          <path d="M12 1v5h5M4.500 6h4M4.500 10h9M4.500 14h9M4.500 18h9" />
        </svg>
        Taller1
      </a>
    </aside>
  );
}

/* ---------- PDF viewer ---------- */

function Sep() {
  return <span className="h-5 w-px bg-[#b5b5b8]" />;
}

function PdfBar() {
  return (
    <div className={`flex h-[33px] shrink-0 items-center border-b border-[#b8b8b8] bg-[#f9f9fa] pl-2 pr-2.5 text-sm text-[#111] ${UI}`}>
      <div className="flex w-[355px] shrink-0 items-center">
        <button type="button" aria-label="Barra lateral">
          <svg viewBox="0 0 16 14" className="h-3.5 w-4" fill="none" stroke="#4a4a4a" strokeWidth="1.100">
            <rect x="0.600" y="1.500" width="14.800" height="11" rx="1.500" />
            <path d="M7.500 1.500v11M2 4.500h3M2 7h3M2 9.500h3" />
          </svg>
        </button>
        <button type="button" aria-label="Buscar" className="ml-[45px]">
          <svg viewBox="0 0 14 14" className="size-3.5" fill="none" stroke="#444" strokeWidth="1.200">
            <circle cx="5.500" cy="5.500" r="4.700" />
            <path d="m9 9 4.500 4" />
          </svg>
        </button>
        <button type="button" aria-label="Página anterior" className="ml-[18px]">
          <svg viewBox="0 0 12 8" className="h-2 w-3" fill="none" stroke="#aaa" strokeWidth="1.200"><path d="m0 7 6-6 6 6" /></svg>
        </button>
        <span className="mx-2"><Sep /></span>
        <button type="button" aria-label="Página siguiente">
          <svg viewBox="0 0 12 8" className="h-2 w-3" fill="none" stroke="#333" strokeWidth="1.200"><path d="m0 1 6 6 6-6" /></svg>
        </button>
        <input
          id="pdfpage"
          defaultValue="1"
          className="ml-2.5 h-[26px] w-14 rounded-[2px] border border-[#bbb] bg-white pr-2 text-right text-[13px]"
        />
        <label htmlFor="pdfpage" className="ml-1.5 whitespace-nowrap text-[13px]">de 2</label>
      </div>
      <div className="flex items-center">
        <button type="button" aria-label="Reducir">
          <svg viewBox="0 0 12 12" className="size-3" stroke="#333" strokeWidth="1.200"><path d="M0 6h12" /></svg>
        </button>
        <span className="mx-2"><Sep /></span>
        <button type="button" aria-label="Aumentar">
          <svg viewBox="0 0 12 12" className="size-3" stroke="#333" strokeWidth="1.200"><path d="M0 6h12M6 0v12" /></svg>
        </button>
        <span className="ml-[11px] grid items-center">
          <select aria-label="Tamaño" className="col-start-1 row-start-1 h-[27px] w-[180px] appearance-none bg-[#d6d6da] pl-1.5">
            <option>Tamaño automático</option>
          </select>
          <svg viewBox="0 0 10 6" className="pointer-events-none col-start-1 row-start-1 mr-2.5 h-1.5 w-2.5 justify-self-end" fill="none" stroke="#333" strokeWidth="1.200">
            <path d="m1 1 4 4 4-4" />
          </svg>
        </span>
      </div>
      <div className="flex flex-1 items-center justify-end gap-[9px]">
        <button type="button" aria-label="Imprimir" className="mr-1">
          <svg viewBox="0 0 16 16" className="size-4" fill="#3c3c3c">
            <path d="M4 1h8v3H4zM2 5h12c1 0 1.500.5 1.500 1.500V12H13V9.500H3V12H.5V6.500C.5 5.500 1 5 2 5z" />
            <path d="M4.500 10.500h7v4h-7z" fill="none" stroke="#3c3c3c" />
          </svg>
        </button>
        <button type="button" aria-label="Guardar">
          <svg viewBox="0 0 16 14" className="h-3.5 w-4" fill="none" stroke="#444" strokeWidth="1.200">
            <path d="M7 3 5.500 1.500H2c-.8 0-1.300.5-1.300 1.300v8.400c0 .8.500 1.300 1.300 1.300h12c.8 0 1.300-.5 1.300-1.300V4.500c0-.8-.5-1.300-1.300-1.300h-1" />
            <path d="M10.500 1.500V8M8 6l2.500 2.500L13 6" />
          </svg>
        </button>
        <Sep />
        <button type="button" aria-label="Texto" className="ml-1">
          <svg viewBox="0 0 12 16" className="h-4 w-3" fill="none" stroke="#555" strokeWidth="1.200"><path d="M2 .8h3l1 .7 1-.7h3M6 1v14M2 15.200h3l1-.7 1 .7h3" /></svg>
        </button>
        <button type="button" aria-label="Dibujar" className="ml-1.5">
          <svg viewBox="0 0 16 16" className="size-4" fill="none" stroke="#444" strokeWidth="1.200">
            <path d="m2.500 9 7-7.500c1-1 3.500 1 2.500 2.500L5.500 12 2 13zM8 3.500 10.500 6M1 15.300c4-2 6 0 8-.5s4 0 6 .3" />
          </svg>
        </button>
        <Sep />
        <button type="button" aria-label="Más herramientas">
          <svg viewBox="0 0 14 12" className="h-3 w-3.5" fill="none" stroke="#444" strokeWidth="1.200"><path d="m1 1 5 5-5 5M8 1l5 5-5 5" /></svg>
        </button>
      </div>
    </div>
  );
}

function Lines({ rows }: { rows: ReactNode[] }) {
  return (
    <>
      {rows.map((r, i) => (
        <span key={i} className="block text-justify whitespace-nowrap [text-align-last:justify]">
          {r}
        </span>
      ))}
    </>
  );
}

const ITEMS: { rows: ReactNode[]; last?: ReactNode }[] = [
  {
    rows: [
      <><b>(0.5)</b> Diseñe un espacio de trabajo para un robot cuyo correspondiente espacio de configuración</>,
      "(o alguna parte de él) “se parezca” al espacio de trabajo. Indique cuál fue el razonamiento que",
      "siguió y porqué el espacio diseñado hace que se parezcan. Incluya figuras de los dos espacios y del",
    ],
    last: <>robot. Nombre su archivo YAML <i>parecido.yml</i>.</>,
  },
  {
    rows: [
      <><b>(0.5)</b> Diseñe un espacio de trabajo para un robot cuya transformación a espacio de configuración</>,
      "(o alguna parte de él) “no sea intuitiva”. Indique porqué no le parece intuitivo. Incluya figuras de",
    ],
    last: <>los dos espacios y del robot. Nombre su archivo YAML <i>nointuitivo.yml</i>.</>,
  },
  {
    rows: [
      <><b>(1.0)</b> Diseñe un robot manipulador con dos grados de libertad: una articulación rotacional y una</>,
      "prismática (en cualquier orden). Asegúrese que el espacio de configuración tenga dos componentes",
    ],
  },
];

function PdfPages() {
  return (
    <div className="min-h-0 flex-1 overflow-hidden bg-[#d4d4d7] px-5 font-['Liberation_Serif',serif] text-[17px] leading-5 text-[#111]">
      <article className="-mt-[13px] bg-white pb-8 pl-[58px] pr-[57px]">
        <p>
          <Lines
            rows={[
              "un documento (pdf) que explique detalladamente la solución implementada para cada ejercicio. Además",
              "del documento, cada grupo deberá entregar una carpeta comprimida con los archivos solicitados en cada",
            ]}
          />
          punto punto del taller. Cada ejercicio especifica cómo se deben nombrar los archivos.
        </p>
        <h3 className="mt-[27px] text-[25px] leading-7 font-bold">Enunciado</h3>
        <ol className="ml-[19px] mt-3.5 flex flex-col gap-[11px]">
          {ITEMS.map((it, i) => (
            <li key={i} className="flex">
              <span className="w-5 shrink-0">{i + 1}.</span>
              <div className="min-w-0 flex-1">
                <Lines rows={it.rows} />
                {it.last}
              </div>
            </li>
          ))}
        </ol>
        <p className="mt-[23px] text-center">1</p>
      </article>
      <article className="mt-[11px] h-96 bg-white pl-[97px] pr-[57px] pt-[77px]">
        <Lines rows={["desconectados usando máximo dos obstaculos circulares. Incluya figuras de los dos espacios y del"]} />
        <p>robot. Nombre su archivo YAML <i>desconectado.yml</i>.</p>
      </article>
    </div>
  );
}

function Viewer() {
  return (
    <section className="mr-[69px] flex min-w-0 flex-1 flex-col">
      <div className="flex h-[70px] shrink-0 items-center justify-end gap-11 border-b border-[#cdd5dc] pr-[27px]">
        <button type="button" aria-label="Descargar">
          <svg viewBox="0 0 18 18" className="mr-2.5 size-[18px]" fill="none" stroke="#494c4e" strokeWidth="1.500">
            <path d="M6 12H4a3.300 3.300 0 0 1-.3-6.500A5.300 5.300 0 0 1 13.700 5 3.600 3.600 0 0 1 14 12h-2" />
            <path d="M9 7v7" />
            <path d="M6 13h6l-3 3.500z" fill="#494c4e" stroke="none" />
          </svg>
        </button>
        <button type="button" aria-label="Pantalla completa">
          <svg viewBox="0 0 18 18" className="size-[18px]" fill="#494c4e">
            <path d="M0 0h6.500l-2 2L8 5.500 6 7.500 2.500 4 0 6.500zM18 0v6.500L15.500 4 12 7.500 10 5.500 13.500 2l-2-2zM0 18v-6.500L2.500 14 6 10.500l2 2L4.500 16l2 2zM18 18h-6.500l2-2-3.500-3.500 2-2 3.500 3.500 2.500-2.500z" />
          </svg>
        </button>
        <button type="button" aria-label="Más opciones">
          <svg viewBox="0 0 18 4" className="h-1 w-[18px]" fill="#494c4e">
            <circle cx="2" cy="2" r="2" />
            <circle cx="9" cy="2" r="2" />
            <circle cx="16" cy="2" r="2" />
          </svg>
        </button>
      </div>
      <div className="mx-[15px] flex min-h-0 flex-1 flex-col">
        <PdfBar />
        <PdfPages />
      </div>
    </section>
  );
}

function Browser() {
  return (
    <main className="flex min-w-0 flex-1 flex-col bg-white">
      <TabStrip />
      <ToolBar />
      <div className="flex min-h-0 flex-1 flex-col border-t-4 border-[#ffff00] font-['Lato',sans-serif]">
        <CourseHeader />
        <CourseNav />
        <div className="flex min-h-0 flex-1 pt-[13px]">
          <Outline />
          <Viewer />
        </div>
      </div>
    </main>
  );
}

export default function App() {
  return (
    <div className={`flex h-screen w-full overflow-hidden bg-white ${UI}`}>
      <PlannerWindow />
      <div className="flex min-w-0 flex-1 flex-col">
        <TopBar />
        <div className="flex min-h-0 flex-1">
          <Dock />
          <Browser />
        </div>
      </div>
    </div>
  );
}
